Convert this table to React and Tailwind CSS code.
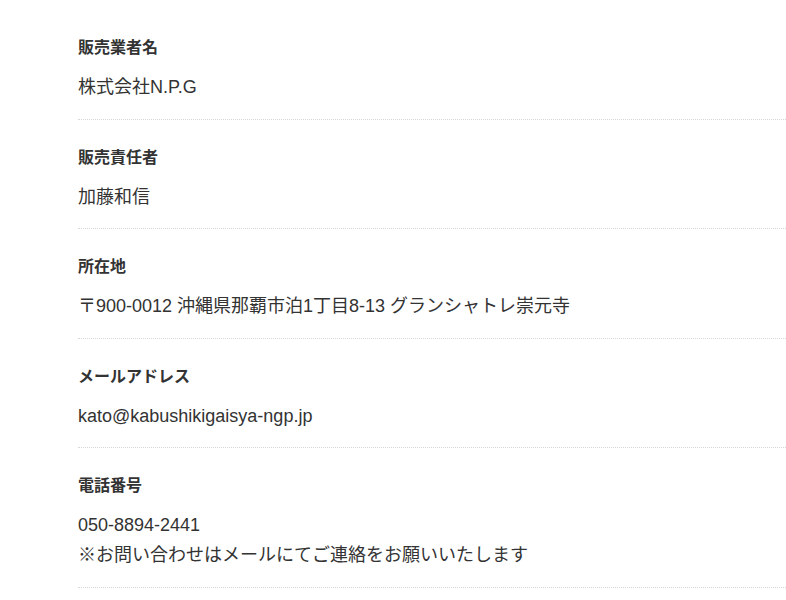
const rows = [
  { label: '販売業者名', lines: ['株式会社N.P.G'] },
  { label: '販売責任者', lines: ['加藤和信'] },
  { label: '所在地', lines: ['〒900-0012 沖縄県那覇市泊1丁目8-13 グランシャトレ崇元寺'] },
  { label: 'メールアドレス', lines: ['kato@kabushikigaisya-ngp.jp'] },
  { label: '電話番号', lines: ['050-8894-2441', '※お問い合わせはメールにてご連絡をお願いいたします'] },
];

const App = () => {
  return (
    <div
      className="min-h-screen bg-white pt-[10px] pl-[78px] text-[#333]"
      style={{ fontFamily: '"Liberation Sans", "Noto Sans CJK JP", sans-serif' }}
    >
      {rows.map((row, index) => (
        <div key={index} className="pt-[26px] pb-[16.6px] border-b border-dotted border-[#d8d8d8]">
          <div className="text-[16px] leading-[24px] font-bold">{row.label}</div>
          <div className="mt-[12px] text-[18px] leading-[30px]">
            {row.lines.map((line, i) => (
              <div key={i}>{line}</div>
            ))}
          </div>
        </div>
      ))}
    </div>
  );
};

export default App;
